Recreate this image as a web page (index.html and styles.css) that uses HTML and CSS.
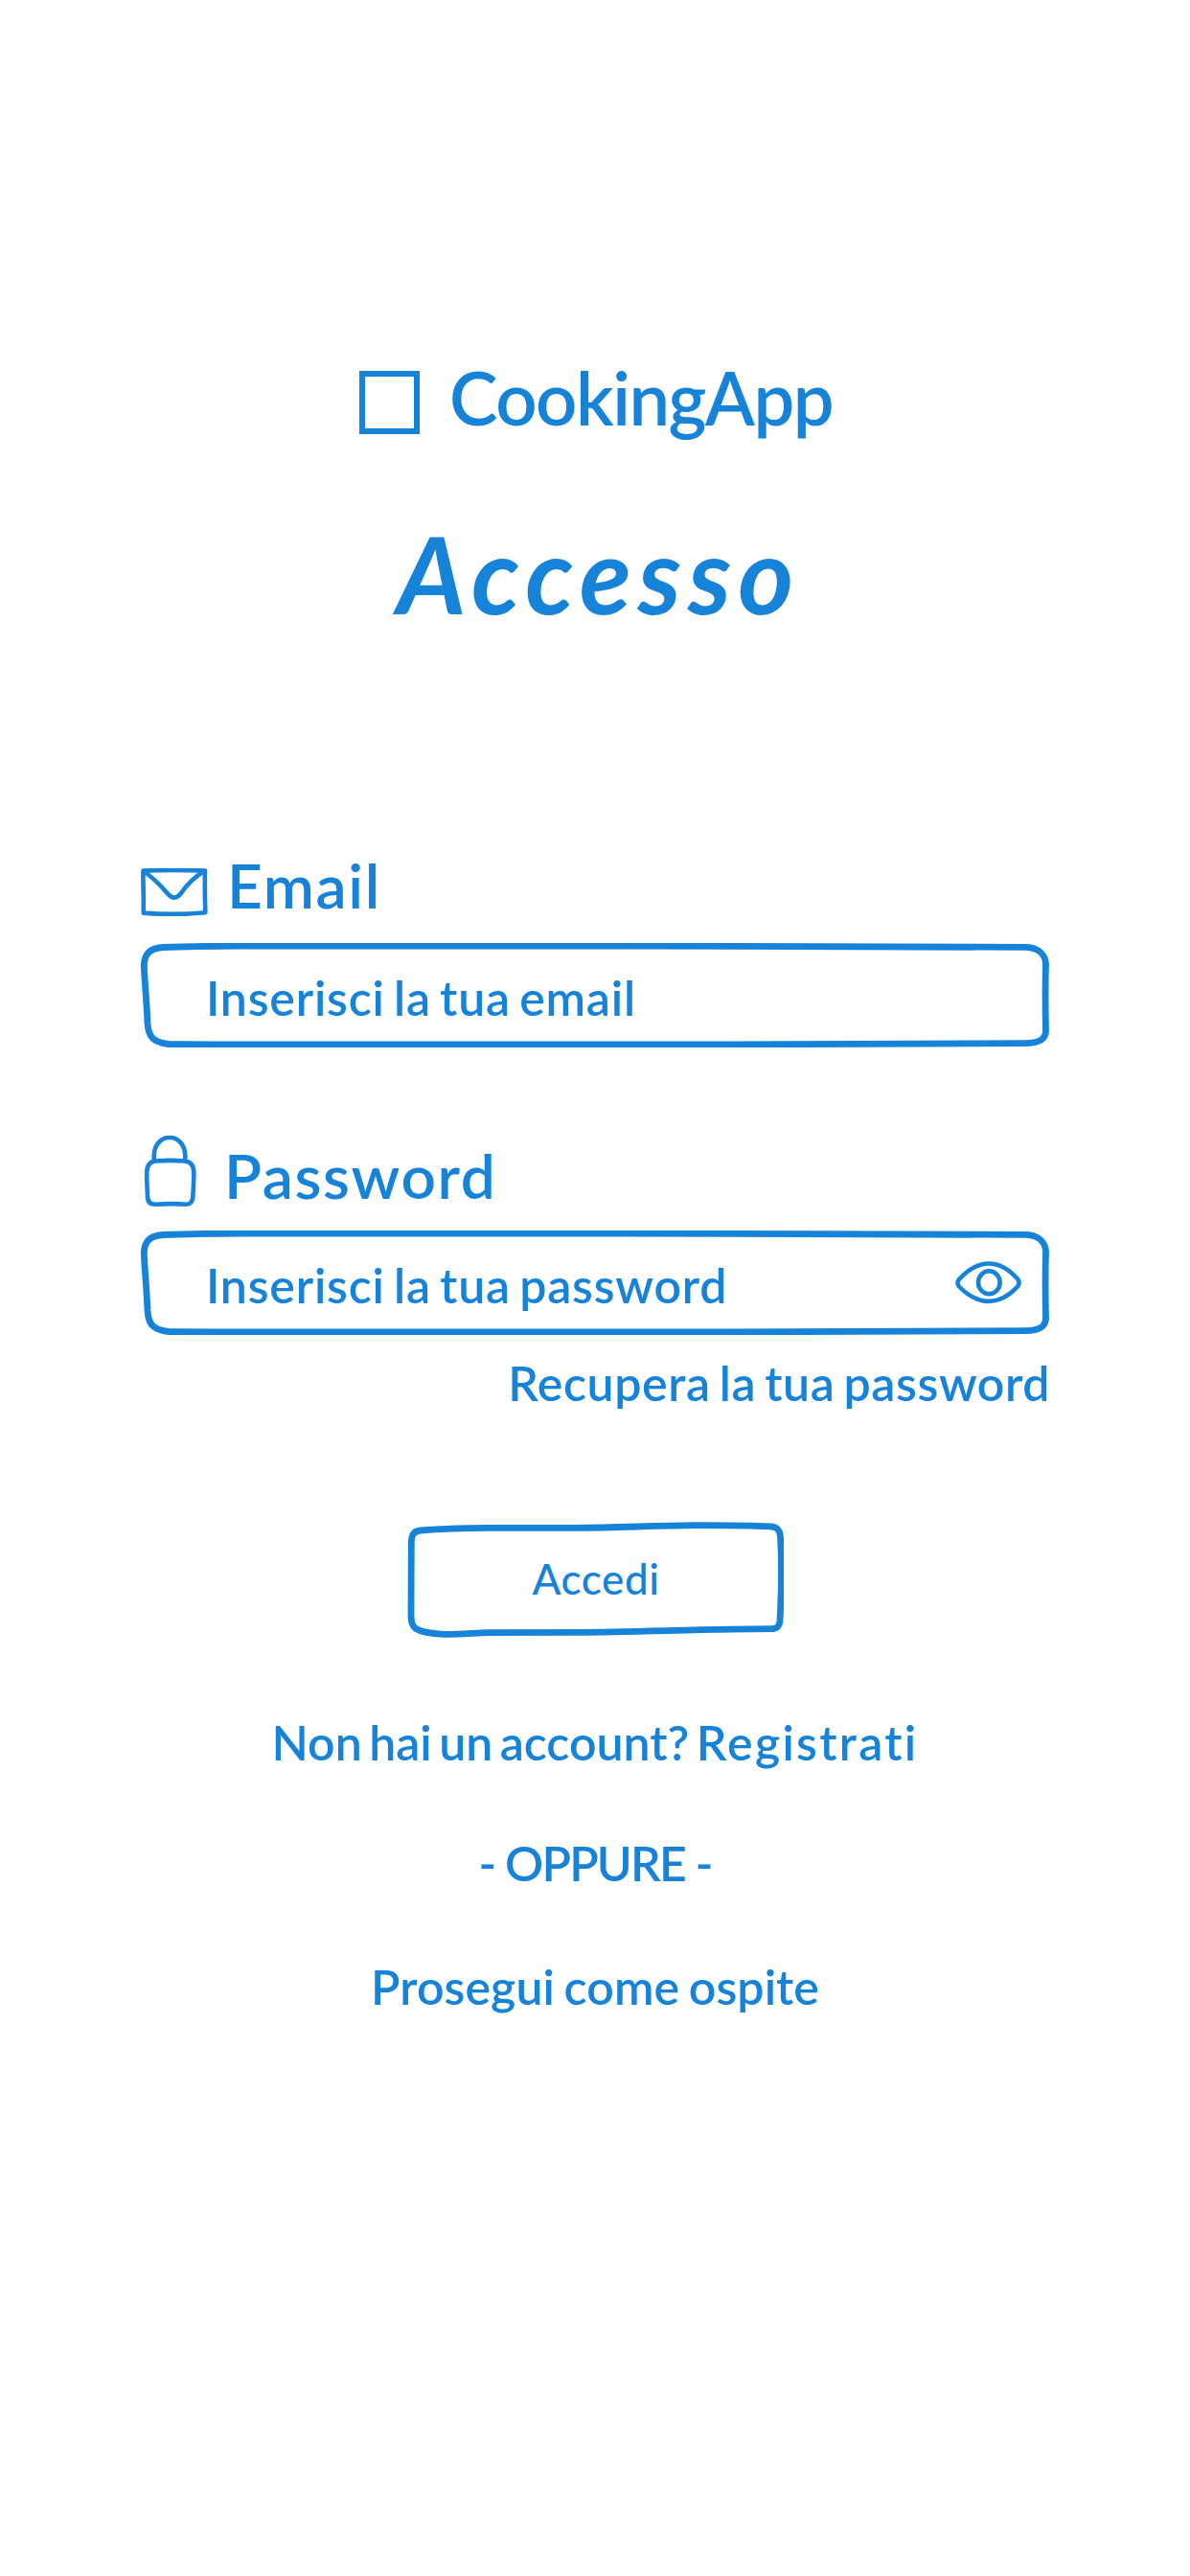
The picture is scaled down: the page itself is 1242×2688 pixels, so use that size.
FILE: index.html
```html
<!DOCTYPE html>
<html lang="it">
<head>
<meta charset="utf-8">
<title>CookingApp - Accesso</title>
<link rel="stylesheet" href="styles.css">
</head>
<body>
<main class="screen">
  <header class="brand">
    <span class="brand-mark"></span>
    <span class="brand-name">CookingApp</span>
  </header>
  <h1 class="title"><span class="title-text">Accesso</span></h1>

  <form class="form">
    <div class="label-row">
      <svg class="icon-mail" viewBox="0 0 70 50" aria-hidden="true"><path d="M2.5 2.5C22 1.8 48 1.8 67 2.5C66.5 18 67 33 67.3 46.3C48 48.2 22 48.2 2.7 46.6C3.2 32 2.2 17 2.5 2.5ZM3 3C14 11 20 17 28 26.500Q35 35 42 26Q52 11.500 66 3"/></svg>
      <span class="label label-email">Email</span>
    </div>
    <div class="field">
      <svg class="frame" viewBox="0 0 950 109" preserveAspectRatio="none" aria-hidden="true"><path d="M25 4.500C60 3 90 3 140 3L500 3C700 3 860 4 925 4.400C938 5 945 12 945.500 22C944.800 45 945 70 945.500 92C945 101 938 104.500 924 104.600C800 106 700 106 600 106L140 106C90 106 60 106 30 105.500C14 104 9 98 8 84C7 60 5 40 4.300 25C4 12 10 5 25 4.500Z"/></svg>
      <span class="hint hint-email">Inserisci la tua email</span>
    </div>

    <div class="label-row label-row-lock">
      <svg class="icon-lock" viewBox="0 0 60 76" aria-hidden="true"><path d="M14 26C10 -6 50 -6 46 26M16 26.500C25 25.800 37 25.800 45 26.500Q55 27 55.300 38C55.500 48 54.500 57 54.300 64Q54 71.500 47 71.800C36 70.800 26 71 15 71.800Q7.500 72 7 64C6.800 54 5.800 47 6.300 38Q6.500 27 16 26.500Z"/></svg>
      <span class="label label-password">Password</span>
    </div>
    <div class="field">
      <svg class="frame" viewBox="0 0 950 109" preserveAspectRatio="none" aria-hidden="true"><path d="M25 4.500C60 3 90 3 140 3L500 3C700 3 860 4 925 4.400C938 5 945 12 945.500 22C944.800 45 945 70 945.500 92C945 101 938 104.500 924 104.600C800 106 700 106 600 106L140 106C90 106 60 106 30 105.500C14 104 9 98 8 84C7 60 5 40 4.300 25C4 12 10 5 25 4.500Z"/></svg>
      <span class="hint hint-password">Inserisci la tua password</span>
      <svg class="icon-eye" viewBox="0 0 70 46" aria-hidden="true"><path d="M4 19C24-3 46-3 65 18.500Q68 22.500 65 26.500C46 47 24 47 4 26.500Q1 22.500 4 19Z"/><ellipse cx="35.300" cy="22.300" rx="11.300" ry="12"/></svg>
    </div>
    <a class="recover">Recupera la tua password</a>
  </form>

  <div class="button">
    <svg class="frame" viewBox="0 0 393 121" aria-hidden="true"><path d="M14 9C40 7 65 6.500 90 6.400L176 6.400C220 6 260 4 300 3.700C330 3.600 350 4 380 4.800C387 5.500 389 9 389.500 16C391 40 390.500 75 389 103C388.500 109 386 111.700 380 111.700C310 112 240 115 176 115.400L85 115.600C70 116 55 117.500 38 117.300C22 116.500 14 114.500 9 111.500C5 108 4.300 105 4 98L4.300 22C4.500 13 7 9.600 14 9Z"/></svg>
    <span class="button-text">Accedi</span>
  </div>

  <p class="line register">Non hai un account? <a class="register-link">Registrati</a></p>
  <p class="line divider">- OPPURE -</p>
  <p class="line guest">Prosegui come ospite</p>
</main>
</body>
</html>
```
FILE: styles.css
```css
* { box-sizing: border-box; }
body {
  margin: 0;
  background: #fff;
  color: #1683d9;
  font-family: Lato, "Open Sans", sans-serif;
  font-size: 50px;
  font-weight: 600;
  font-variant-ligatures: none;
  line-height: 60px;
}
.screen {
  display: flex;
  flex-direction: column;
  align-items: center;
  width: 1242px;
  height: 2688px;
  padding-top: 364px;
}
svg {
  display: block;
  flex: none;
  fill: none;
  stroke: currentColor;
  stroke-width: 4.6;
  stroke-linecap: round;
  stroke-linejoin: round;
}
.brand {
  display: flex;
  align-self: flex-start;
  gap: 31px;
  height: 100px;
  padding-left: 375px;
  font-size: 76px;
  letter-spacing: -1.5px;
  line-height: 102px;
}
.brand-mark {
  width: 63px;
  height: 66px;
  margin-top: 23px;
  border: 6px solid;
}
.title {
  margin: 74px 0 230px;
  padding-left: 8px;
  font-size: 111px;
  font-style: italic;
  font-weight: 700;
  letter-spacing: 7.2px;
  line-height: 120px;
}
.form {
  display: flex;
  flex-direction: column;
  width: 950px;
}
.label-row {
  display: flex;
  align-items: flex-end;
  height: 70px;
  margin-bottom: 26px;
  font-size: 64px;
  letter-spacing: 1.6px;
  line-height: 68px;
}
.label-row-lock {
  height: 76px;
  margin: 92px 0 23px;
}
.icon-mail { width: 70px; height: 50px; margin: 0 20px 2px 1px; }
.icon-lock { width: 60px; height: 76px; margin: 0 27px 0 1px; }
.field {
  position: relative;
  display: flex;
  align-items: center;
  height: 109px;
  padding: 5px 29px 0 69px;
}
.frame {
  position: absolute;
  left: 0;
  top: 0;
  width: 100%;
  height: 100%;
  stroke-width: 6.8;
}
.hint {
  letter-spacing: 0.8px;
  word-spacing: -4px;
}
.icon-eye { width: 70px; height: 46px; margin: -4px 0 0 auto; }
.recover {
  align-self: flex-end;
  margin-top: 20px;
  letter-spacing: 0.6px;
  word-spacing: -4px;
}
.button {
  position: relative;
  display: flex;
  align-items: center;
  justify-content: center;
  width: 393px;
  height: 121px;
  margin-top: 115px;
  padding: 0 0 4px 2px;
  font-size: 44px;
  font-weight: 500;
  letter-spacing: 0.6px;
}
.line { margin: 0; }
.register {
  margin-top: 79px;
  letter-spacing: 0;
  word-spacing: -5px;
}
.register-link { letter-spacing: 2.3px; }
.divider { margin-top: 66px; letter-spacing: -1.8px; }
.guest {
  margin-top: 69px;
  letter-spacing: 0.1px;
  word-spacing: -3px;
}
.brand-name, .title-text, .label, .hint, .recover, .button-text, .line { white-space: nowrap; }
```
